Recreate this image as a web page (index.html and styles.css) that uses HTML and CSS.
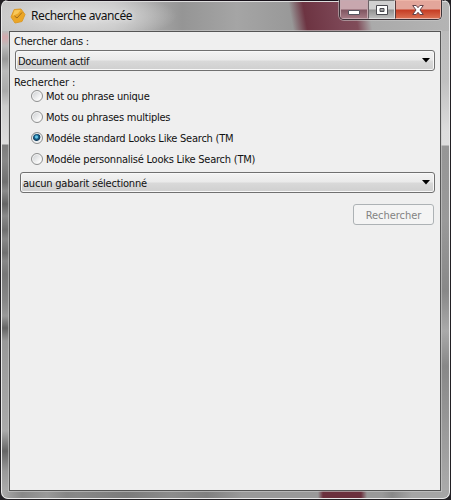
FILE: index.html
```
<!DOCTYPE html>
<html lang="fr">
<head>
<meta charset="utf-8">
<title>Recherche avancée</title>
<link rel="stylesheet" href="styles.css">
</head>
<body>
<div class="window">
  <header class="titlebar">
    <svg class="app-icon" width="16" height="16" viewBox="0 0 16 16"><path d="M4.2 1.500 11 1l4 5.500-3 7L5 15 1 9z" fill="#eba626" stroke="#dc9a28"/><path d="M4.600 2.300 10.600 2 8 5.500 2.500 8z" fill="#f8c859"/><path d="M4.500 8 7 10 12 4.500" fill="none" stroke="#a06c1c" stroke-width="1"/></svg>
    <h1 class="title">Recherche avancée</h1>
    <div class="controls">
      <span class="control minimize"><svg width="12" height="12" viewBox="0 0 12 12"><path d="M.5 5.500h11v4H.5z" fill="#fff" stroke="#55555f"/></svg></span>
      <span class="control maximize"><svg width="12" height="12" viewBox="0 0 12 12"><path d="M.5 1.500h11v9H.5zM4 4.500v3h4v-3z" fill="#fff" fill-rule="evenodd" stroke="#4a4a50"/></svg></span>
      <span class="control close"><svg width="12" height="12" viewBox="0 0 12 12"><path d="M.7 1.500h3.500L6 3.700l1.800-2.200h3.500L8 6l3.300 4.500H7.800L6 8.300l-1.800 2.200H.7L4 6z" fill="#fff" stroke="#63434a"/></svg></span>
    </div>
  </header>
  <main class="client">
    <div class="label first">Chercher dans :</div>
    <div class="combo scope"><span>Document actif</span><svg width="8" height="5" viewBox="0 0 8 5"><path d="M0 0h8L4 4.500z"/></svg></div>
    <div class="label second">Rechercher :</div>
    <div class="options">
      <div class="option"><i class="radio"></i><span>Mot ou phrase unique</span></div>
      <div class="option"><i class="radio"></i><span>Mots ou phrases multiples</span></div>
      <div class="option"><i class="radio checked"></i><span>Modéle standard Looks Like Search (TM</span></div>
      <div class="option"><i class="radio"></i><span>Modéle personnalisé Looks Like Search (TM)</span></div>
    </div>
    <div class="combo template"><span>aucun gabarit sélectionné</span><svg width="8" height="5" viewBox="0 0 8 5"><path d="M0 0h8L4 4.500z"/></svg></div>
    <button class="search" disabled>Rechercher</button>
  </main>
</div>
</body>
</html>
```

FILE: styles.css
```
* { box-sizing: border-box; }
body {
  margin: 0;
  background: #222024;
  font: 11px/14px "DejaVu Sans Condensed", sans-serif;
  letter-spacing: -0.23px;
  color: #111;
  overflow: hidden;
}
.window {
  width: 449px;
  height: 499px;
  margin-left: 1px;
  border: 1px solid #e9e9e9;
  border-top: 0;
  border-radius: 7px;
  padding: 0 6px 7px 7px;
  display: flex;
  flex-direction: column;
  overflow: hidden;
  background:
    linear-gradient(#18121a 0 1px, #ddd 1px 2px, transparent 2px) 0 0 / 100% 2px no-repeat,
    linear-gradient(90deg, transparent 86px, #6b303d 91px 129px, transparent 135px) 230px 490px / 150px 9px no-repeat,
    linear-gradient(90deg, #aaa, #888 20px, #999 45px, #858585 65px, #888 75px, #7b7b7b 125px, #8c8c8c 170px, #808080 205px, #999 240px, #999 380px, #888 390px, #a5a5a5 410px) 0 490px / 100% 9px no-repeat,
    linear-gradient(#bbb 0, #c0c0c0 50px, #ddd 100px, #dedede 114px, #969696 115px, #999 190px, #888 260px, #aaa 300px, #888 335px, #aaa 459px) 100% 31px / 10px 459px no-repeat,
    linear-gradient(#bbb 0, #d4a9ad 6px, #bbb 15px, #999 28px, #bbb 40px, #aaa 60px, #ccc 75px, #ddd 113px, #7d7d7d 114px, #888 130px, #707070 151px, #8b8b8b 160px, #656565 173px, #8a8a8a 185px, #707070 199px, #888 208px, #707070 222px, #888 230px, #777 243px, #888 270px, #999 285px, #656565 297px, #999 310px, #aaa 400px, #666 420px, #999 440px, #aaa 459px) 0 31px / 10px 459px no-repeat,
    linear-gradient(80deg, transparent 287px, #6d3442 301px, #7c4655 335px, #804c59 351px, #aaa 365px, #b5b5b5 450px) 0 0 / 100% 31px no-repeat,
    radial-gradient(ellipse 100px 25px at 75px 16px, #d8d8d8 25%, transparent) 0 0 / 100% 31px no-repeat,
    linear-gradient(90deg, #c4c4c4, #c0c0c0 110px, #959595 180px, #a5a5a5 235px, #969696 300px) 0 0 / 100% 31px no-repeat,
    #aaa;
}
.titlebar {
  height: 31px;
  flex: none;
  display: flex;
  align-items: flex-start;
}
.app-icon { margin: 8px 0 0 1px; }
.title {
  margin: 8px 0 0 5px;
  font: 400 12px/15px "Noto Sans", sans-serif;
  letter-spacing: -0.42px;
  white-space: nowrap;
  text-shadow: 0 0 5px #eee;
}
.controls {
  display: flex;
  width: 103px;
  height: 20px;
  margin: 0 1px 0 auto;
  border: 1px solid #3b3238;
  border-top: 0;
  border-radius: 0 0 5px 5px;
  box-shadow: 0 0 0 1px #ccc8;
  overflow: hidden;
}
.control {
  display: flex;
  align-items: center;
  justify-content: center;
  width: 27px;
  border: 1px solid #ddd;
  border-top-color: #777;
}
.minimize { width: 28px; background: linear-gradient(#c8a7ae 0 8px, #805561 9px, #a37983); border-color: #c5a9b0; }
.minimize svg { margin-top: 3px; }
.maximize { background: linear-gradient(#d0d0d0 0 8px, #929292 9px, #bbb); border-left-color: #6b6065; }
.close { width: 46px; background: linear-gradient(#e3a69b 0 8px, #c53c23 9px, #d96e50); border-color: #edb5a8; border-left-color: #56393a; }
.client {
  width: 432px;
  height: 460px;
  border: 1px solid #555;
  box-shadow: 0 0 0 1px #ccc9;
  background: #efefef;
  padding: 2px 5px 0;
  display: flex;
  flex-direction: column;
}
.label { height: 14px; line-height: 16px; white-space: nowrap; margin-left: -1px; }
.second { margin-top: 4px; height: 12px; letter-spacing: -0.1px; }
.combo {
  display: flex;
  align-items: center;
  justify-content: space-between;
  height: 21px;
  width: 420px;
  border: 1px solid #707070;
  border-radius: 3px;
  padding: 0 4px 0 2px;
  background: linear-gradient(#f3f3f3 0, #eaeaea 9px, #d9d9d9 10px, #cfcfcf);
  box-shadow: inset 0 0 0 1px #f8f8f8;
  white-space: nowrap;
}
.combo span, .option span { padding-top: 2px; }
.scope { margin-top: 2px; letter-spacing: -0.35px; }
.template { width: 415px; margin: 3px 0 0 5px; letter-spacing: -0.2px; }
.options { margin: -2px 0 0 16px; }
.option { display: flex; align-items: center; gap: 3px; height: 21px; white-space: nowrap; }
.radio {
  width: 12px;
  height: 12px;
  border: 1px solid #8e8f8f;
  border-radius: 50%;
  background: linear-gradient(135deg, #c9cccf, #fafafa 75%);
  box-shadow: inset 0 0 0 1px #f5f5f5;
}
.checked { background: radial-gradient(circle at 45% 40%, #65c6e8 0 1px, #176690 2px, #123c5c 3.5px, #e7ecef 4.3px); }
.search {
  width: 81px;
  height: 21px;
  margin: 11px 1px 0 auto;
  padding: 2px 0 0;
  border: 1px solid #adb2b5;
  border-radius: 3px;
  background: #f4f4f4;
  color: #838383;
  font: inherit;
  letter-spacing: -0.05px;
}
```
